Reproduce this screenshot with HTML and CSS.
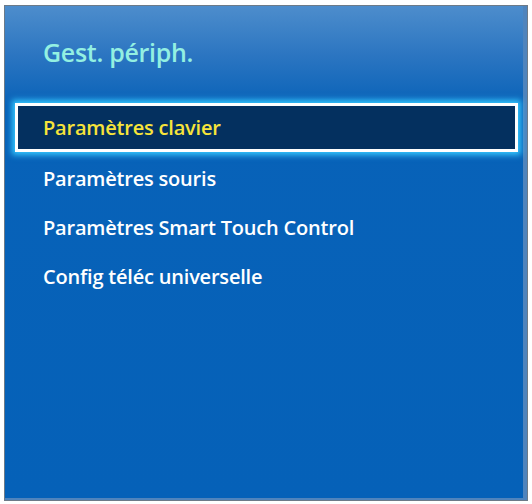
FILE: index.html
```html
<!DOCTYPE html>
<html lang="fr">
<head>
    <meta charset="UTF-8">
    <title>Gest. périph.</title>
    <link rel="stylesheet" href="styles.css">
</head>
<body>
    <div class="panel">
        <h1 class="titel">Gest. périph.</h1>
        <ul class="menu">
            <li class="eintrag aktiv">Paramètres clavier</li>
            <li class="eintrag">Paramètres souris</li>
            <li class="eintrag">Paramètres Smart Touch Control</li>
            <li class="eintrag">Config téléc universelle</li>
        </ul>
    </div>
</body>
</html>
```

FILE: styles.css
```css
body{
    margin: 0;
    background-color: #ffffff;
    font-family: "Open Sans", "Noto Sans", sans-serif;
}

/*panel*/
.panel{
    box-sizing: border-box;
    margin: 5px 0 0 4px;
    width: 524px;
    height: 496px;
    border: 1px solid #6c7a88;
    box-shadow: inset -4px -2px 0 #4f84bd;
    background: linear-gradient(to bottom, #4d8dcc 0px, #2b75c1 50px, #0862b8 100px, #0561b8 100%);
    padding: 29px 10px 0 10px;
}

.titel{
    margin: 0 0 0 28px;
    font-size: 25px;
    font-weight: 600;
    color: #93f0e2;
    letter-spacing: -0.3px;
    height: 68px;
}

.menu{
    list-style: none;
    margin: 0;
    padding: 0;
}

.eintrag{
    height: 49px;
    line-height: 49px;
    padding-left: 28px;
    font-size: 20px;
    font-weight: 600;
    color: #ffffff;
    letter-spacing: -0.2px;
}

.aktiv{
    box-sizing: border-box;
    margin: 0 -1px 2px 0;
    height: 49px;
    line-height: 43px;
    padding-left: 25px;
    background-color: #04305f;
    border: 3px solid #ffffff;
    color: #f7e43a;
    box-shadow: 0 0 6px 3px #35c8ff;
}
```
